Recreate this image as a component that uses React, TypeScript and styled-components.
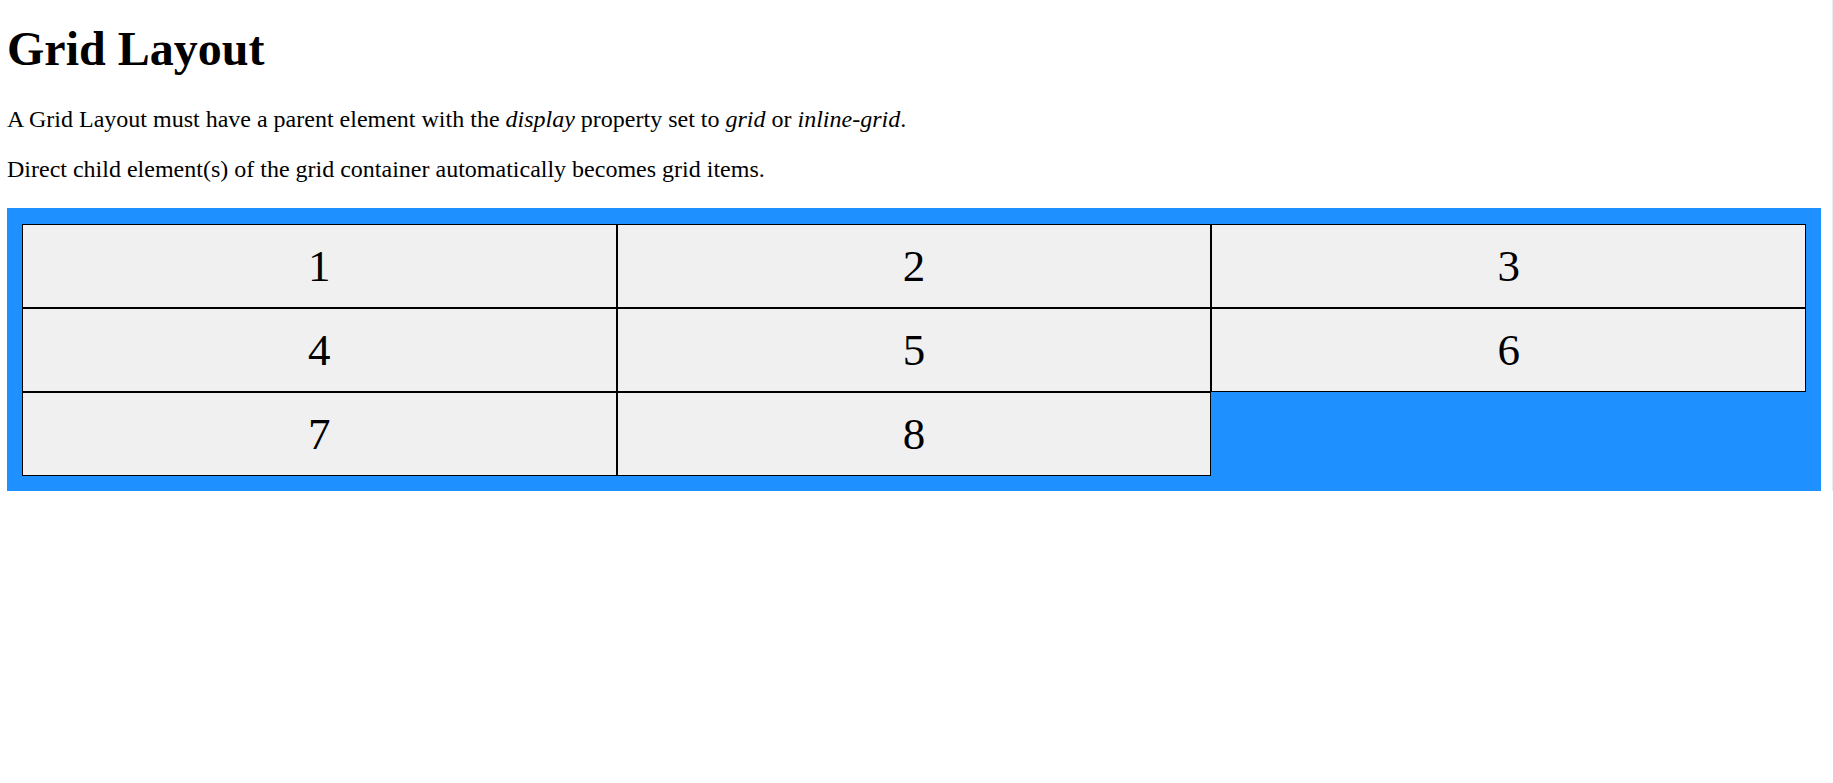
import React from "react";
import styled, { createGlobalStyle } from "styled-components";

const GlobalStyle = createGlobalStyle`
  html, body {
    margin: 0;
    padding: 0;
    background: #ffffff;
  }
  html {
    border-right: 1px solid #ececec;
  }
  body {
    font-family: "Liberation Serif", "Times New Roman", serif;
    color: #000;
  }
`;

const Page = styled.div`
  padding: 0 11px 0 7px;
`;

const Title = styled.h1`
  font-size: 48px;
  font-weight: bold;
  line-height: 55px;
  margin: 21px 0 29px;
`;

const Para = styled.p<{ $last?: boolean }>`
  font-size: 24px;
  line-height: 28px;
  margin: 0 0 ${(p) => (p.$last ? "25px" : "22px")};
`;

const GridContainer = styled.div`
  display: grid;
  grid-template-columns: repeat(3, 1fr);
  background-color: #1e90ff;
  padding: 16px 15px 15px;
`;

const GridItem = styled.div`
  background-color: #f0f0f0;
  border: 1px solid #000;
  padding: 15px;
  font-size: 45px;
  line-height: 52px;
  text-align: center;
`;

export default function App() {
  const items = [1, 2, 3, 4, 5, 6, 7, 8];
  return (
    <>
      <GlobalStyle />
      <Page>
        <Title>Grid Layout</Title>
        <Para>
          A Grid Layout must have a parent element with the <em>display</em> property set to{" "}
          <em>grid</em> or <em>inline-grid</em>.
        </Para>
        <Para $last>Direct child element(s) of the grid container automatically becomes grid items.</Para>
        <GridContainer>
          {items.map((n) => (
            <GridItem key={n}>{n}</GridItem>
          ))}
        </GridContainer>
      </Page>
    </>
  );
}
